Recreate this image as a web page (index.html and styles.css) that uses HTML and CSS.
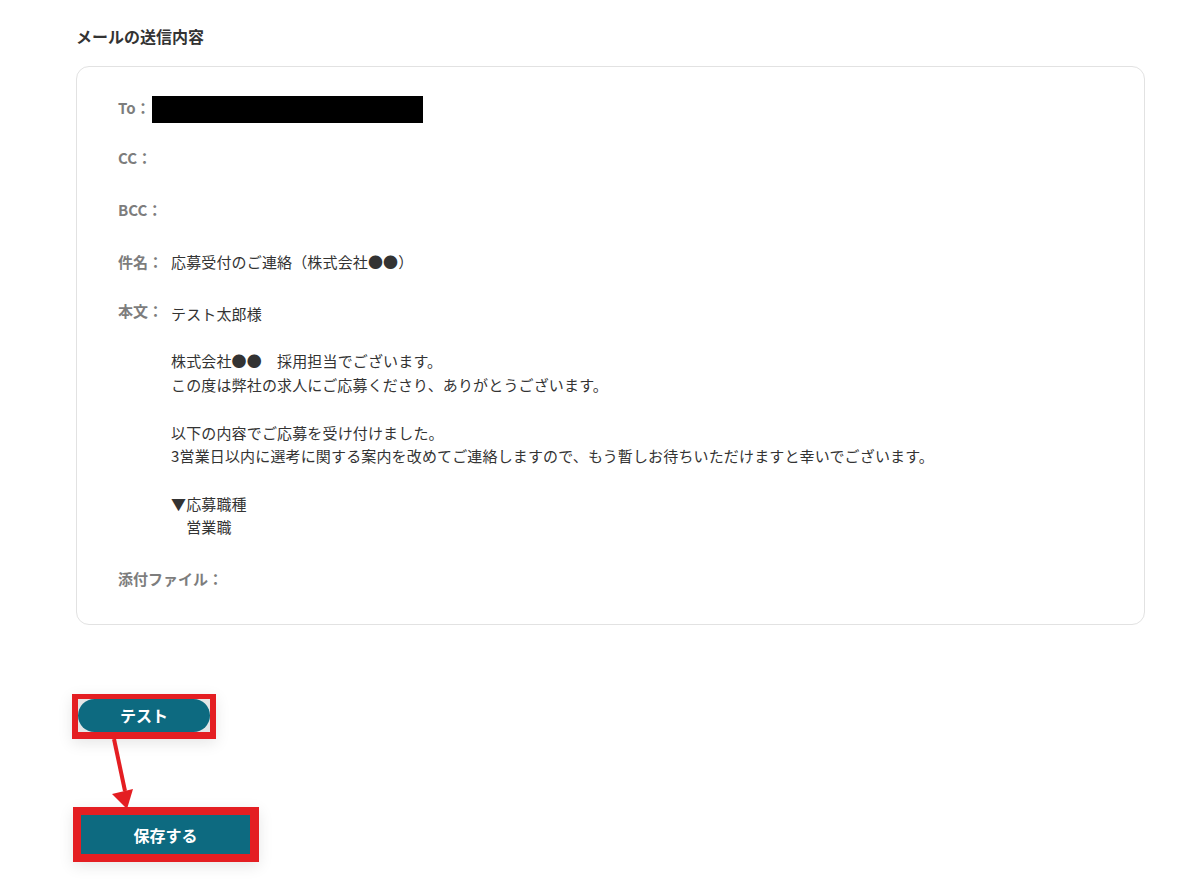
FILE: index.html
```html
<!DOCTYPE html>
<html lang="ja">
<head>
<meta charset="utf-8">
<title>メールの送信内容</title>
<link rel="stylesheet" href="styles.css">
</head>
<body>
<main class="page">
  <h2 class="section-title">メールの送信内容</h2>
  <section class="mail-card">
    <div class="row row-to">
      <span class="label">To：</span>
      <span class="redacted"></span>
    </div>
    <div class="row">
      <span class="label">CC：</span>
    </div>
    <div class="row">
      <span class="label">BCC：</span>
    </div>
    <div class="row">
      <span class="label">件名：</span>
      <span class="value">応募受付のご連絡（株式会社●●）</span>
    </div>
    <div class="row">
      <span class="label label-body">本文：</span>
      <div class="value body-text">テスト太郎様

株式会社●●　採用担当でございます。
この度は弊社の求人にご応募くださり、ありがとうございます。

以下の内容でご応募を受け付けました。
3営業日以内に選考に関する案内を改めてご連絡しますので、もう暫しお待ちいただけますと幸いでございます。

▼応募職種
　営業職</div>
    </div>
    <div class="row row-last">
      <span class="label">添付ファイル：</span>
    </div>
  </section>

  <div class="actions">
    <div class="mark mark-test">
      <button class="btn btn-pill" type="button">テスト</button>
    </div>
    <div class="mark mark-save">
      <button class="btn btn-square" type="button">保存する</button>
    </div>
    <svg class="arrow" width="40" height="80" viewBox="0 0 40 80" aria-hidden="true">
      <line x1="6" y1="0" x2="17" y2="52" stroke="#e41e22" stroke-width="4"/>
      <polygon points="4,55 25,50 19,70" fill="#e41e22"/>
    </svg>
  </div>
</main>
</body>
</html>
```

FILE: styles.css
```css
* {
  box-sizing: border-box;
}

html, body {
  margin: 0;
  padding: 0;
  background: #ffffff;
}

body {
  font-family: "Noto Sans CJK JP", "Noto Sans", sans-serif;
  color: #333333;
}

.page {
  padding: 24px 0 0 76px;
  width: 1145px;
}

.section-title {
  margin: 0 0 18px 0;
  font-size: 16px;
  line-height: 24px;
  font-weight: 700;
  color: #333333;
}

.mail-card {
  border: 1px solid #e2e2e2;
  border-radius: 13px;
  padding: 29px 41px 33px 41px;
}

.row {
  display: flex;
  align-items: flex-start;
  margin-bottom: 28px;
}

.row-to {
  margin-bottom: 26px;
}

.row-last {
  margin-bottom: 0;
}

.label {
  font-size: 15px;
  line-height: 24px;
  font-weight: 700;
  color: #7d7d7d;
  white-space: nowrap;
}

.label-body {
  margin-top: -3px;
}

.redacted {
  display: block;
  width: 271px;
  height: 27px;
  background: #000000;
  margin: 0 0 -3px 1px;
}

.value {
  margin-left: 8px;
  font-size: 15px;
  line-height: 24px;
  letter-spacing: 0.15px;
  color: #333333;
}

.body-text {
  white-space: pre-wrap;
  line-height: 23.7px;
}

.actions {
  position: relative;
  padding-top: 69px;
  padding-bottom: 24px;
}

.mark {
  display: inline-block;
  border: solid #e41e22;
  background: #e4e6e7;
  box-shadow: 0 4px 14px rgba(0, 0, 0, 0.10);
}

.mark-test {
  display: block;
  width: 144px;
  margin-left: -4px;
  border-width: 5px 6px 7px 6px;
}

.mark-save {
  display: block;
  width: 186px;
  margin-left: -3px;
  margin-top: 68px;
  border-width: 8px 9px 8px 8px;
}

.btn {
  display: block;
  width: 100%;
  border: 0;
  background: #0d6a80;
  color: #ffffff;
  font-family: "Noto Sans CJK JP", "Noto Sans", sans-serif;
  font-size: 16px;
  font-weight: 700;
  padding: 0;
  cursor: pointer;
}

.btn-pill {
  height: 33px;
  border-radius: 17px;
  line-height: 33px;
}

.btn-square {
  height: 39px;
  border-radius: 0;
  line-height: 38px;
}

.arrow {
  position: absolute;
  left: 32px;
  top: 114px;
  overflow: visible;
}
```
